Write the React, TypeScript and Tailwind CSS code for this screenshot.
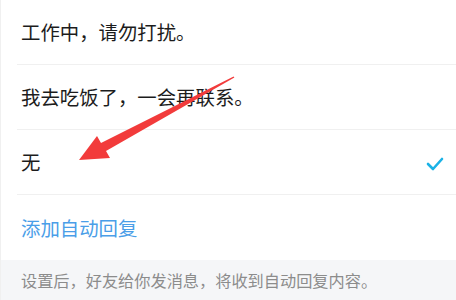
const rows = ["工作中，请勿打扰。", "我去吃饭了，一会再联系。", "无"];

const font = { fontFamily: '"Noto Sans CJK SC", "Noto Sans", sans-serif' };

const App = () => {
  return (
    <div className="relative w-[456px] h-[300px] overflow-hidden bg-white border-l border-[#f0f0f0]" style={font}>
      {rows.map((text, i) => (
        <div key={text}>
          <div className="h-16 flex items-center justify-between pl-5 pr-3">
            <span className="text-[19.4px] text-[#1c1c1c]">{text}</span>
            {i === 2 && (
              <svg width="18" height="14" viewBox="0 0 18 14" className="mt-1">
                <path d="M2 7 L7 12 L16 2" fill="none" stroke="#1ab2e6" strokeWidth="2.6" strokeLinecap="round" strokeLinejoin="round" />
              </svg>
            )}
          </div>
          <div className="ml-4 h-px bg-[#f0f0f0]" />
        </div>
      ))}
      <div className="h-[65px] flex items-center pl-5">
        <span className="text-[19.4px] text-[#4a9ee8]">添加自动回复</span>
      </div>
      <div className="h-10 bg-[#f5f6f8] flex items-center pl-5">
        <span className="text-[16.2px] text-[#8c8c8c]">设置后，好友给你发消息，将收到自动回复内容。</span>
      </div>

      {/* red annotation arrow */}
      <svg className="absolute left-0 top-0 pointer-events-none" width="456" height="300">
        <polygon
          points="78,160 109,158 105,151 233.4,77.5 232.6,76.5 100,143 96,136"
          fill="#f23b3b"
        />
      </svg>
    </div>
  );
};

export default App;
